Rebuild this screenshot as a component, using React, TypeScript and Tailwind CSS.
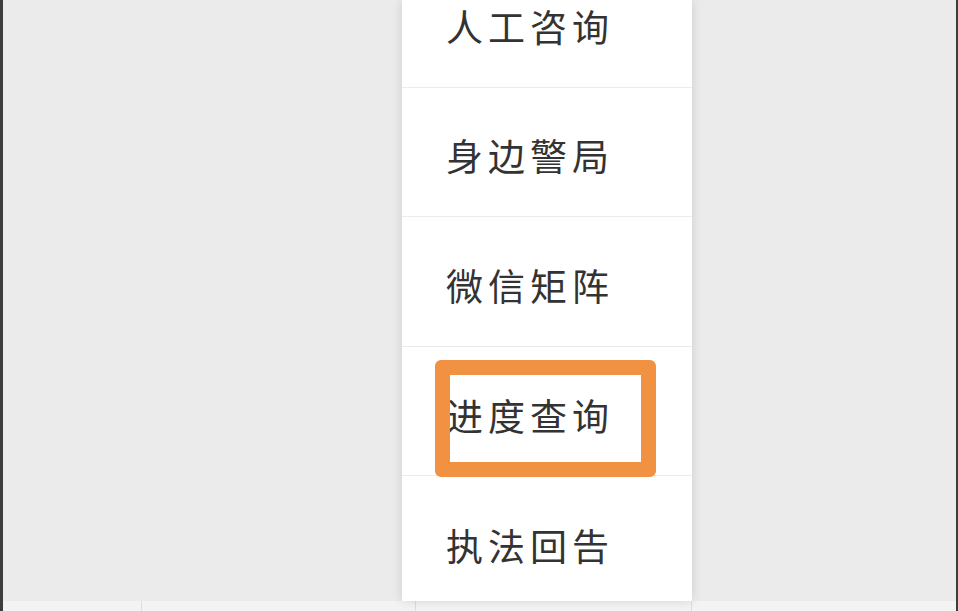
import React from "react";

const items = ["人工咨询", "身边警局", "微信矩阵", "进度查询", "执法回告"];

export default function App() {
  return (
    <div
      className="relative w-[958px] h-[611px] overflow-hidden bg-[#ebebeb] border-l-[3px] border-r-[2px] border-[#3d3d3d] flex flex-col"
      style={{ fontFamily: '"Noto Sans CJK SC", "Noto Sans", sans-serif' }}
    >
      <div className="h-[601px] flex flex-row">
        <div className="w-[399px] shrink-0" />
        <div className="relative w-[290px] h-[601px] shrink-0 bg-white overflow-hidden shadow-[0_0_10px_rgba(0,0,0,0.13)]">
          <div className="-mt-[42px] flex flex-col">
            {items.map((t, i) => (
              <div
                key={t}
                className={`h-[129.6px] shrink-0 flex items-center pl-[44px] pt-[8px] ${i < items.length - 1 ? "border-b border-[#ebebeb]" : ""}`}
              >
                <span className="text-[37px] leading-none tracking-[5px] text-[#333333] font-normal">{t}</span>
              </div>
            ))}
          </div>
        </div>
        <div className="flex-1" />
      </div>
      <div className="h-[10px] flex flex-row bg-[#f3f3f3]">
        <div className="w-[139px] border-r border-[#dddddd]" />
        <div className="w-[274px] border-r border-[#dddddd]" />
        <div className="w-[276px] border-r border-[#dddddd]" />
        <div className="flex-1" />
      </div>
      <div className="absolute left-[432px] top-[360px] w-[221px] h-[117px] rounded-[6px] border-[15px] border-[#f09242]" />
    </div>
  );
}
